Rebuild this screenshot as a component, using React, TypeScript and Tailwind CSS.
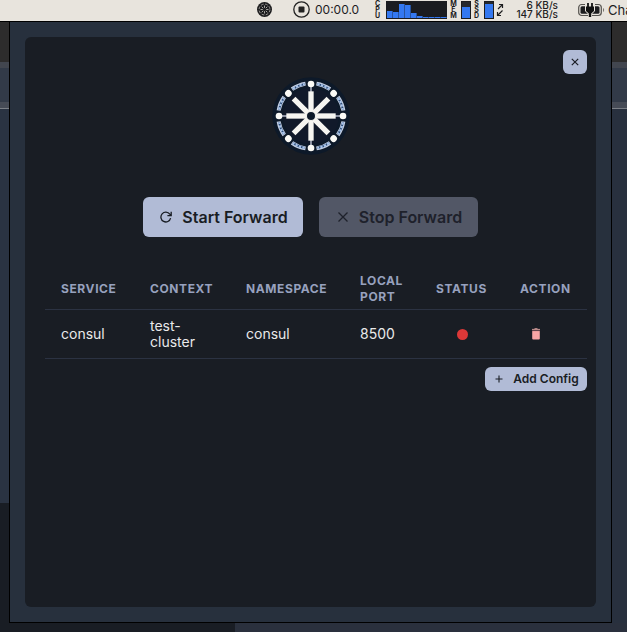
import React from 'react';

const SPOKES = [0, 45, 90, 135, 180, 225, 270, 315];

function WheelLogo() {
  return (
    <svg viewBox="-117 -117 234 234" className="size-[78px]" role="img" aria-label="Wheel logo">
      <circle r="116" fill="#0d1929" />
      <circle r="84" fill="#11192a" />
      {SPOKES.map((angle) => (
        <g key={angle} transform={`rotate(${angle})`}>
          {angle % 90 === 0 && <path d="M0 -70V-96" stroke="#c9cede" strokeWidth="4" />}
          <path d="M0 -13V-74" stroke="#f6f5f1" strokeWidth="16" />
          <circle cy="-96" r="10" fill="#fbfaf6" />
          <g transform="rotate(22.5)">
            <path d="M-22 -96A98 98 0 0 1 22 -96" fill="none" stroke="#c3cee2" strokeWidth="12" />
            <path d="M-19 -96A98 98 0 0 1 19 -96" fill="none" stroke="#2d4c78" strokeWidth="6" />
            <path
              d="M-19 -96A98 98 0 0 1 19 -96"
              fill="none"
              stroke="#a9c5ec"
              strokeWidth="6"
              strokeDasharray="7 4"
            />
          </g>
        </g>
      ))}
      <circle r="15" fill="#f6f5f1" />
      <circle r="12" fill="#0d1929" />
    </svg>
  );
}

function WheelGlyph() {
  return (
    <svg viewBox="0 0 16 16" className="size-[15px] shrink-0" aria-hidden="true">
      <circle cx="8" cy="8" r="8" fill="#1d1d1f" />
      <circle cx="8" cy="8" r="5.800" fill="none" stroke="#9b9995" strokeWidth="1" strokeDasharray="2.900 1.650" />
      <path
        d="M8 3.800v2.400M8 9.800v2.400M3.800 8h2.400M9.800 8h2.400M5 5l1.600 1.600M9.400 9.400L11 11M11 5L9.400 6.600M6.600 9.400L5 11"
        stroke="#c4c1bc"
        strokeWidth="0.900"
      />
    </svg>
  );
}

function VerticalLabel({ text }: { text: string }) {
  return (
    <span className="flex w-[7px] shrink-0 flex-col items-center text-[7px] font-bold leading-[6px]">
      {text.split('').map((letter, i) => (
        <span key={i} className="h-[6px]">
          {letter}
        </span>
      ))}
    </span>
  );
}

function CpuGraph() {
  const loads = [7, 6, 14, 13, 5, 2, 1, 1, 1, 1];
  return (
    <svg viewBox="0 0 61 18" className="ml-[5px] h-[18px] w-[61px] shrink-0" role="img" aria-label="CPU load">
      <rect width="61" height="18" fill="#1b1c20" />
      {loads.map((load, i) => (
        <rect key={i} x={1 + i * 6} y={17 - load} width="5.600" height={load} fill="#3478f0" />
      ))}
    </svg>
  );
}

function MenuBar() {
  return (
    <header className="flex h-[22px] items-center justify-end overflow-hidden border-b border-black bg-[#e8e4dd] pb-[2px] text-[#1d1d1f]">
      <WheelGlyph />
      <svg viewBox="0 0 17 17" className="ml-[21px] size-[17px] shrink-0" aria-hidden="true">
        <circle cx="8.500" cy="8.500" r="7.700" fill="none" stroke="#222" strokeWidth="1.300" />
        <rect x="5.500" y="5.500" width="6" height="6" rx="1" fill="#222" />
      </svg>
      <span className="ml-[5px] w-[43px] shrink-0 text-[12px] leading-4">00:00.0</span>
      <span className="ml-4 flex items-center">
        <VerticalLabel text="CPU" />
        <CpuGraph />
      </span>
      <span className="ml-[3px] flex items-center">
        <VerticalLabel text="MEM" />
        <span className="ml-1 flex h-[18px] w-[10px] flex-col justify-end border border-[#1d1d1f] bg-[#25272c]">
          <span className="h-[11px] bg-[#3478f0]" />
        </span>
      </span>
      <span className="ml-[2px] flex items-center">
        <VerticalLabel text="SSD" />
        <span className="ml-1 flex h-[18px] w-[10px] flex-col justify-end border border-[#1d1d1f] bg-[#25272c]">
          <span className="h-[14px] bg-[#3478f0]" />
        </span>
      </span>
      <svg
        viewBox="0 0 8 14"
        className="ml-[2px] h-[14px] w-2 shrink-0"
        fill="none"
        stroke="#1d1d1f"
        strokeWidth="1.200"
        aria-hidden="true"
      >
        <path d="M2 6L6.500 1.500M3 1.500H6.500V5M6.500 7.500L1.500 12.500M1.500 9V12.500H5" />
      </svg>
      <span className="ml-[11px] w-[43px] shrink-0 text-right text-[10px] font-medium leading-[9px]">
        <span className="block">6 KB/s</span>
        <span className="block">147 KB/s</span>
      </span>
      <svg viewBox="0 0 27 14" className="ml-5 h-[14px] w-[27px] shrink-0" aria-hidden="true">
        <rect x="0.700" y="1.500" width="22.600" height="11" rx="3" fill="none" stroke="#55534f" strokeWidth="1.200" />
        <rect x="2.500" y="3.300" width="19" height="7.400" rx="1.500" fill="#1d1d1f" />
        <path d="M7 1h10v7l-3 3v2h-4v-2L7 8z" fill="#e8e4dd" />
        <path d="M10 0v4M14 0v4" stroke="#111" strokeWidth="1.800" />
        <path d="M8 3.500h8V8l-2.800 2.500V14h-2.400v-3.500L8 8z" fill="#111" />
        <path d="M25 5v4c1.500-.6 1.500-3.400 0-4z" fill="#77746f" />
      </svg>
      <span className="ml-[3px] w-[19px] shrink-0 whitespace-nowrap text-[13px] leading-4">Cha</span>
    </header>
  );
}

function BackdropTop() {
  return (
    <>
      <div className="h-10 bg-[#2d2c2c]" />
      <div className="h-[6px] bg-[#42464f]" />
      <div className="h-[34px] bg-[#323a48]" />
      <div className="h-[6px] bg-[#464b56]" />
      <div className="h-px bg-[#7b7f86]" />
    </>
  );
}

const headCell = 'pt-px pl-4 text-left text-[12px] font-bold uppercase leading-4 tracking-wider text-[#97a1be]';
const bodyCell = 'py-2 pl-4 text-[14px] leading-4';

function ConfigTable() {
  return (
    <table className="w-full table-fixed border-collapse text-[#e9e9ea]">
      <colgroup>
        <col className="w-[89px]" />
        <col className="w-[96px]" />
        <col className="w-[114px]" />
        <col className="w-[76px]" />
        <col className="w-[84px]" />
        <col className="w-[83px]" />
      </colgroup>
      <thead>
        <tr className="h-10 border-b border-[#2b3242]">
          <th scope="col" className={headCell}>Service</th>
          <th scope="col" className={headCell}>Context</th>
          <th scope="col" className={headCell}>Namespace</th>
          <th scope="col" className={headCell}>Local Port</th>
          <th scope="col" className={headCell}>Status</th>
          <th scope="col" className={headCell}>Action</th>
        </tr>
      </thead>
      <tbody>
        <tr className="h-[49px] border-b border-[#2b3242]">
          <td className={bodyCell}>consul</td>
          <td className={bodyCell}>
            <span className="block w-12">test-cluster</span>
          </td>
          <td className={bodyCell}>consul</td>
          <td className={bodyCell}>8500</td>
          <td className="pt-px">
            <span className="mx-auto block size-[11px] rounded-full bg-[#dc3838]" role="img" aria-label="Stopped" />
          </td>
          <td className="pl-4">
            <button type="button" aria-label="Delete config" className="flex h-6 w-8 items-center justify-center">
              <svg viewBox="0 0 10 12" className="h-3 w-[10px]" aria-hidden="true">
                <path d="M1.200 2.500H8.800V10.500a1 1 0 0 1-1 1H2.200a1 1 0 0 1-1-1z" fill="#f7a5a5" />
                <path d="M1 1.400h8M3.500 0.700h3" stroke="#c99594" strokeWidth="1" />
                <path d="M1 2.600h8" stroke="#49323a" strokeWidth="0.700" />
              </svg>
            </button>
          </td>
        </tr>
      </tbody>
    </table>
  );
}

export default function App() {
  return (
    <div className="flex min-h-screen flex-col bg-[#191d24] font-['Inter','Liberation_Sans',sans-serif]">
      <MenuBar />
      <div className="flex flex-1">
        <div className="flex w-[9px] shrink-0 flex-col">
          <BackdropTop />
          <div className="h-[394px] bg-[#2a3342]" />
        </div>
        <div className="flex min-w-0 flex-1 flex-col border-x border-b border-black bg-[#27303d] px-[15px] pb-[15px] pt-[15px]">
          <main className="flex flex-1 flex-col rounded-md bg-[#191d24] pt-[13px]">
            <button
              type="button"
              aria-label="Close"
              className="mr-[9px] flex size-6 items-center justify-center self-end rounded-md bg-[#b1bbd6] text-[#1a1d25]"
            >
              <svg viewBox="0 0 8 8" className="size-2" stroke="currentColor" strokeWidth="1.200" aria-hidden="true">
                <path d="M0.800 0.800l6.400 6.400M7.200 0.800L0.800 7.200" />
              </svg>
            </button>
            <div className="mt-[3px] flex justify-center">
              <WheelLogo />
            </div>
            <div className="mt-[42px] flex justify-center gap-4">
              <button
                type="button"
                className="flex h-10 w-[160px] items-center justify-center gap-[10px] whitespace-nowrap rounded-md bg-[#b1bbd6] pl-[2px] text-[16px] font-semibold text-[#191d24]"
              >
                <svg
                  viewBox="0 0 12 12"
                  className="size-3"
                  fill="none"
                  stroke="currentColor"
                  strokeWidth="1.300"
                  aria-hidden="true"
                >
                  <path d="M10.600 7.200A4.900 4.900 0 1 1 9.800 3.200L11 4.400M11.200 0.800V4.600H7.400" />
                </svg>
                Start Forward
              </button>
              <button
                type="button"
                disabled
                className="flex h-10 w-[159px] items-center justify-center gap-[10px] whitespace-nowrap rounded-md bg-[#525766] pl-[2px] text-[16px] font-semibold text-[#1e212b]"
              >
                <svg viewBox="0 0 12 12" className="size-3" stroke="currentColor" strokeWidth="1.300" aria-hidden="true">
                  <path d="M1.500 1.500l9 9M10.500 1.500l-9 9" />
                </svg>
                Stop Forward
              </button>
            </div>
            <div className="mt-8 flex flex-col pl-5 pr-[9px]">
              <ConfigTable />
              <button
                type="button"
                className="mt-2 flex h-6 w-[102px] items-center justify-center gap-[10px] self-end whitespace-nowrap rounded-md bg-[#b1bbd6] pl-[2px] text-[12px] font-semibold text-[#191d24]"
              >
                <svg viewBox="0 0 8 8" className="size-2" stroke="currentColor" strokeWidth="1.100" aria-hidden="true">
                  <path d="M4 0.500v7M0.500 4h7" />
                </svg>
                Add Config
              </button>
            </div>
          </main>
        </div>
        <div className="flex w-[15px] shrink-0 flex-col bg-[#28303e]">
          <BackdropTop />
        </div>
      </div>
      <div className="flex h-[9px]">
        <div className="w-[235px] bg-[#191d24]" />
        <div className="flex-1 bg-[#2a303d]" />
      </div>
    </div>
  );
}
